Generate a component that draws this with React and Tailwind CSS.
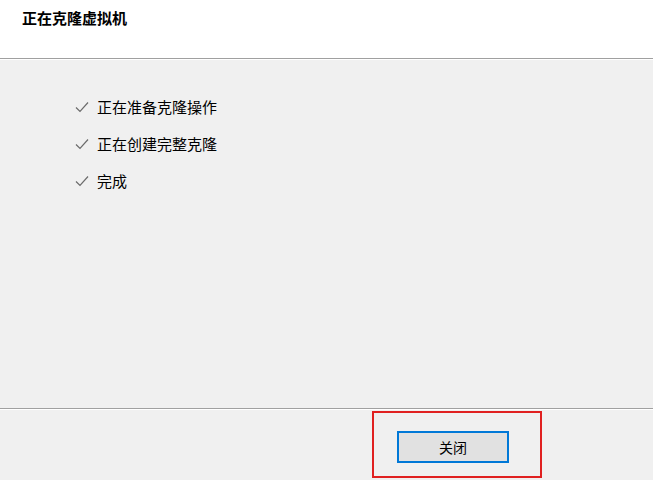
import React from 'react';

const steps = ['正在准备克隆操作', '正在创建完整克隆', '完成'];

function Check() {
  return (
    <svg width="14" height="12" viewBox="0 0 14 12" className="shrink-0">
      <path d="M1 6.5 L5 10.5 L13 1.5" fill="none" stroke="#6b6b6b" strokeWidth="1.2" />
    </svg>
  );
}

export default function App() {
  return (
    <div
      className="w-[653px] h-[480px] flex flex-col bg-[#f0f0f0] text-black overflow-hidden"
      style={{ fontFamily: '"Noto Sans CJK SC", "Noto Sans", sans-serif' }}
    >
      <div className="h-[58px] shrink-0 bg-white pl-[22px] pt-[7px] text-[15px] font-bold leading-[22px]">
        正在克隆虚拟机
      </div>
      <div className="h-px bg-[#a0a0a0]" />
      <div className="h-px bg-white" />
      <div className="flex-1 flex flex-col gap-[15px] pl-[75px] pt-[36px]">
        {steps.map(s => (
          <div key={s} className="flex items-center gap-[8px] h-[22px] text-[15px]">
            <Check />
            <span>{s}</span>
          </div>
        ))}
      </div>
      <div className="h-px bg-[#a0a0a0]" />
      <div className="h-px bg-white" />
      <div className="h-[70px] shrink-0 flex items-start pl-[372px] pt-[1px]">
        <div className="w-[170px] h-[67px] border-2 border-[#e02020] flex items-start pl-[23px] pt-[18px]">
          <button className="w-[112px] h-[32px] border-2 border-[#0078d7] bg-[#e1e1e1] text-[14px] flex items-center justify-center">
            关闭
          </button>
        </div>
      </div>
    </div>
  );
}
